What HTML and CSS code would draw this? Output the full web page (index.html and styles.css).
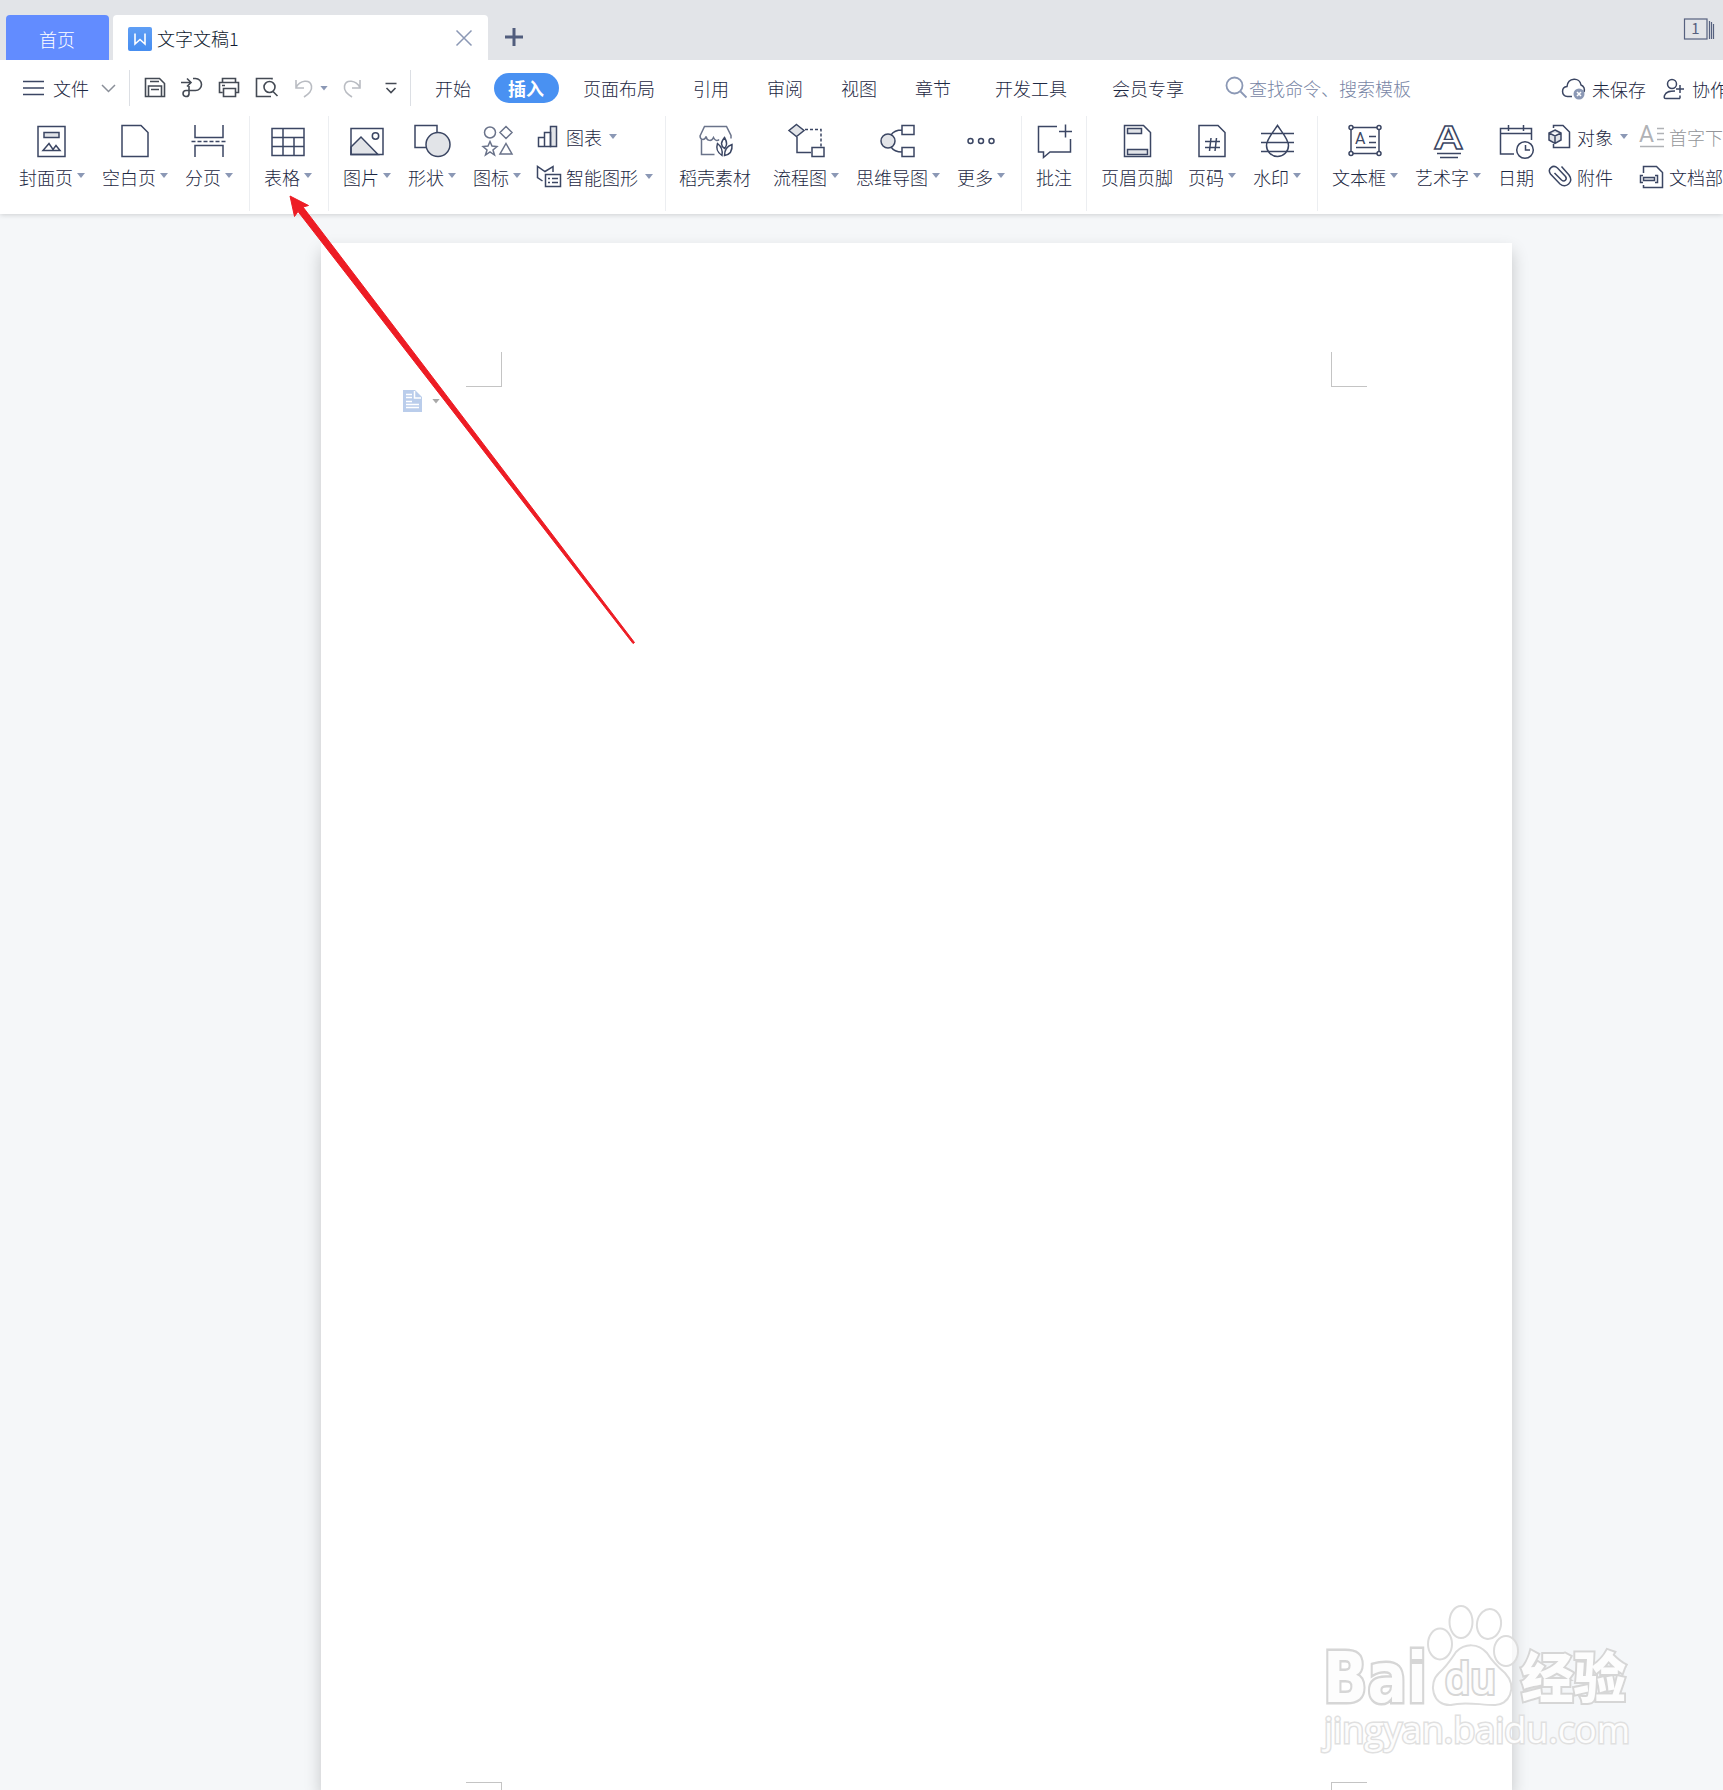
FILE: index.html
```html
<!DOCTYPE html>
<html lang="zh-CN">
<head>
    <meta charset="UTF-8">
    <meta name="viewport" content="width=device-width, initial-scale=1.0">
    <title>文字文稿1</title>
    <link rel="stylesheet" href="styles.css">
</head>
<body>
    <div class="tabs">
        <div class="tab home">首页</div>
        <div class="tab doc">
            <svg class="logo" width="24" height="24"><path d="M7 6.500v10.500l5-4.500 5 4.500V6.500"/></svg>
            <span>文字文稿1</span>
            <svg class="close" width="16" height="16"><path d="M.5.500l15 15M15.500.500l-15 15"/></svg>
        </div>
        <svg class="plus" width="18" height="18"><path d="M9 0v18M0 9h18"/></svg>
        <svg class="windows" width="32" height="22"><rect x="1.500" y="1" width="22.500" height="20"/><path d="M26.500 3v18M28.500 4v17M30.500 6v15"/><text x="12.500" y="16">1</text></svg>
    </div>

    <div class="menu">
        <div class="file">
            <svg width="22" height="16"><path d="M0 1.500h21M0 8h21M0 14.500h21"/></svg>
            <span>文件</span>
            <svg class="chev" width="15" height="9"><path d="M1 1l6.500 6.500L14 1"/></svg>
        </div>
        <div class="quick">
            <svg width="24" height="24"><path d="M2.500 2.500h14l5 5v13h-19zM5.500 20v-10h13V20M7 5.500h9M8 13.500h8" /></svg>
            <svg width="24" height="24"><path d="M1 6.500h9M7 2.500l4 4-4 4M13 2.500h2.500a6 6 0 0 1 0 12H6a3 3 0 1 0 3 3.500V10"/></svg>
            <svg width="24" height="24"><path d="M5.500 6V2.500h13V6M5.500 16.500h-3v-10h19v10h-3M6.500 12.500h12v8h-12zM5 9.500h3"/></svg>
            <svg width="26" height="24"><path d="M18 3.500V2.500H2.500v18H17M19 15.500l4.500 4.500"/><circle cx="15.500" cy="11" r="5.500"/></svg>
            <svg class="off undo" width="20" height="20"><path d="M2 2v8h8M2 9.500C6 2 16 1 17.500 8c1 5-3 8-7.500 11"/></svg>
            <i class="caret"></i>
            <svg class="off redo" width="20" height="20"><path d="M18 2v8h-8M18 9.500C14 2 4 1 2.500 8c-1 5 3 8 7.500 11"/></svg>
            <svg class="more" width="12" height="12"><path d="M.500 1.500h11M1.500 6L6 10.500 10.500 6"/></svg>
        </div>
        <div class="nav">
            <span>开始</span>
            <span class="active">插入</span>
            <span>页面布局</span>
            <span>引用</span>
            <span>审阅</span>
            <span>视图</span>
            <span>章节</span>
            <span class="dev">开发工具</span>
            <span class="vip">会员专享</span>
        </div>
        <div class="search">
            <svg width="24" height="24"><circle cx="9.500" cy="9.500" r="8"/><path d="M15.500 15.500l6 6"/></svg>
            <span>查找命令、搜索模板</span>
        </div>
        <div class="status">
            <svg width="26" height="24"><path d="M11 19.500H6.500C0 19 0 10 6 9.500 7 0 19 0 20 8c3 1 4 4 3 7"/><circle class="dot" cx="18" cy="17" r="5.500"/><path class="x" d="M16 15l4 4M20 15l-4 4"/></svg>
            <span>未保存</span>
            <svg class="user" width="22" height="22"><circle cx="9" cy="6" r="4.500"/><path d="M17 20.500H3c-2 0-2-1-1.500-3C3 13 8 13 12 13M13 11h8M17 7v8M17 20.500v-3"/></svg>
            <span>协作</span>
        </div>
    </div>

    <div class="ribbon">
        <div class="group">
            <div class="btn">
                <svg width="36" height="36"><path d="M4 3.500h27v30H4zM9 27.500h17l-4-5-3 4-4-6z"/><path class="fill" d="M10 9.500h15v5H10z"/></svg>
                <span class="caretd">封面页</span>
            </div>
            <div class="btn">
                <svg width="36" height="36"><path d="M5 2.500h19l7 7v24H5z"/></svg>
                <span class="caretd">空白页</span>
            </div>
            <div class="btn">
                <svg width="36" height="36"><path d="M4 2v12.500h28V2M4 34V22.500h28V34"/><path stroke-dasharray="4 2" d="M.500 18.500h35"/></svg>
                <span class="caretd">分页</span>
            </div>
        </div>
        <div class="group">
            <div class="btn">
                <svg width="36" height="36"><path d="M2 5.500h32v27H2zM2 14.500h32M2 23.500h32M13 5.500v27M24 14.500v18"/></svg>
                <span class="caretd">表格</span>
            </div>
        </div>
        <div class="group charts">
            <div class="btn">
                <svg width="36" height="36"><path class="fill" d="M2 24l10-10 17 17.500H2z"/><path d="M2 5.500h32v26H2z"/><circle cx="26.500" cy="13" r="3.200"/></svg>
                <span class="caretd">图片</span>
            </div>
            <div class="btn">
                <svg width="36" height="36"><path d="M1 2.500h22v22H1z"/><circle class="fill" cx="24" cy="21.500" r="12"/></svg>
                <span class="caretd">形状</span>
            </div>
            <div class="btn">
                <svg class="soft" width="36" height="36"><circle cx="11" cy="9.500" r="5.500"/><path d="M27 3.500l6 6-6 6-6-6zM27 20.500l6 10.500H21zM11 18.500l2 4.500 5 .500-4 3.500 1.500 5-4.500-3-4.500 3 1.500-5-4-3.500 5-.500z"/></svg>
                <span class="caretd">图标</span>
            </div>
            <div class="stack">
                <div class="small">
                    <svg width="24" height="24"><path class="fill" d="M13.500 1.500h6v20h-6z"/><path d="M1.500 12.500h6v9h-6zM7.500 7.500h6v14h-6z"/></svg>
                    <span class="caretd">图表</span>
                </div>
                <div class="small">
                    <svg width="24" height="24"><path d="M5.500 16L.500 12.500V1.500l7.500 5 8-5V7M8.500 9.500h15v12h-15zM11 13.500h2M15 13.500h6M11 17.500h2M15 17.500h6"/></svg>
                    <span class="caretd">智能图形</span>
                </div>
            </div>
        </div>
        <div class="group material">
            <div class="btn">
                <svg class="soft" width="36" height="36"><path d="M3 13L7.500 3.500h22l4.500 9v3M3 12.500c0 5 5 5 6 1 1 5 6 5 7.500 1 1.500 3 4 4 5.500 2M4.500 16v15.500h13"/><path class="dark" d="M27.500 14.500c-4 5-4 8 0 11 3-3 3-6 0-11zM20.500 20.500c-2 6 0 9 4.500 12 1-6-.500-9-4.500-12zM35 21.500c-6 2-7.500 6-7.500 11 6-1 8-5 7.500-11z"/></svg>
                <span>稻壳素材</span>
            </div>
            <div class="btn">
                <svg width="36" height="36"><path class="fill" d="M8.500 1.500l7.500 6-7.500 6-7.500-6z"/><path d="M9 14v15.500h14M24 24.500h12v9H24z"/><path stroke-dasharray="3 2" d="M17 6.500h16v17"/></svg>
                <span class="caretd">流程图</span>
            </div>
            <div class="btn">
                <svg width="36" height="36"><circle class="fill" cx="8" cy="18" r="7"/><path d="M22 2.500h12v9H22zM22 24.500h12v9H22zM11 12c2-3 5-5 11-5M11 24c2 3 5 5 11 5"/></svg>
                <span class="caretd">思维导图</span>
            </div>
            <div class="btn">
                <svg width="36" height="36"><circle cx="7.500" cy="18" r="2.500"/><circle cx="18" cy="18" r="2.500"/><circle cx="28.500" cy="18" r="2.500"/></svg>
                <span class="caretd">更多</span>
            </div>
        </div>
        <div class="group comment">
            <div class="btn">
                <svg width="36" height="36"><path d="M21 3.500H2.500v25.500h5v5.500l6.500-5.500h20.500V16M29.500 1.500v13M23 8.500h13"/></svg>
                <span>批注</span>
            </div>
        </div>
        <div class="group pages">
            <div class="btn">
                <svg width="36" height="36"><path d="M5.500 2.500h19l7 7v24h-26z"/><path class="fill" d="M8.500 5.500h14v5h-14zM8.500 26.500h20v5h-20z"/></svg>
                <span>页眉页脚</span>
            </div>
            <div class="btn">
                <svg width="36" height="36"><path d="M5 2.500h19l7 7v24H5zM11 18.500h15M11 24.500h15M17 15l-1.500 13M22.500 15L21 28"/></svg>
                <span class="caretd">页码</span>
            </div>
            <div class="btn">
                <svg width="36" height="36"><path d="M2 10.500h33M2 19.500h33M2 28.500h33M18.500 2.500C15 8 7.500 16 7.500 22.500a11 11 0 0 0 22 0C29.500 16 22 8 18.500 2.500z"/></svg>
                <span class="caretd">水印</span>
            </div>
        </div>
        <div class="group last">
            <div class="btn">
                <svg width="36" height="36"><path d="M4 4.500h28v26H4zM9 24.500h20M22 13.500h7M22 19.500h7"/><text class="letter" x="8" y="21">A</text><g class="knob"><circle cx="4" cy="4.500" r="2"/><circle cx="32" cy="4.500" r="2"/><circle cx="4" cy="30.500" r="2"/><circle cx="32" cy="30.500" r="2"/></g></svg>
                <span class="caretd">文本框</span>
            </div>
            <div class="btn">
                <svg width="36" height="38"><path d="M7 30.500h24M10 34.500h18"/><text class="art" x="3.500" y="26" textLength="30" lengthAdjust="spacingAndGlyphs">A</text></svg>
                <span class="caretd">艺术字</span>
            </div>
            <div class="btn">
                <svg width="36" height="36"><path d="M16 31H2.500V5.500h31V17M2.500 10.500h31M10.500 2v6M25.500 2v6M27.500 22v5h4.500"/><circle cx="27" cy="27" r="8.300"/></svg>
                <span>日期</span>
            </div>
            <div class="stack objects">
                <div class="small">
                    <svg width="24" height="24"><path d="M5.500 3V.500h9.500l6.500 6.500v15.500H5.500V19"/><path class="fill" d="M7 5l6 3v7l-6 3.500-6-3.500v-7zM1 8l6 3 6-3M7 11v7.500"/></svg>
                    <span class="caretd">对象</span>
                </div>
                <div class="small">
                    <svg width="24" height="24"><path d="M13.500 1.500l7.500 8.500c5 7-3 14-9 9L2.500 9C-1 4 5-1 9.500 3l8 8.500c2 3-1 6-4 3.500L6.500 8"/></svg>
                    <span>附件</span>
                </div>
            </div>
            <div class="stack parts">
                <div class="small disabled">
                    <svg width="24" height="24"><text class="drop" x="-1" y="17">A</text><path d="M17 3.500h7M17 8.500h7M17 14.500h7M0 21.500h24"/></svg>
                    <span>首字下沉</span>
                </div>
                <div class="small">
                    <svg width="24" height="24"><path d="M3.500 8V1.500h13l6 6v15h-19V20M3 10.500H.500v7H3M15 10.500h2.500v7H15"/><path class="fill" d="M3.500 12.500h11v3h-11z"/></svg>
                    <span>文档部件</span>
                </div>
            </div>
        </div>
    </div>

    <div class="canvas">
        <div class="page">
            <i class="mark tl"></i>
            <i class="mark tr"></i>
            <i class="mark bl"></i>
            <i class="mark br"></i>
            <div class="para">
                <svg width="19" height="22"><path fill="#bacdeb" d="M0 0h12l7 7v15H0z"/><path fill="none" stroke="#fff" d="M11.500 1v7H18M3 4.500h6M3 7.500h6M3 11.500h6M3 14.500h13M3 17.500h13"/></svg>
                <i class="caret gray"></i>
            </div>
        </div>
    </div>

    <svg class="arrow" width="350" height="452"><path d="M2 1l18.500 9.500-5.500 1.500L346.500 447.500l-1.500 1L10 16.500 6.500 21.500z"/></svg>

    <svg class="watermark" width="330" height="160">
        <text class="bai" x="8" y="112" textLength="104" lengthAdjust="spacingAndGlyphs">Bai</text>
        <ellipse cx="125" cy="54" rx="12" ry="15.500"/>
        <ellipse cx="146" cy="32" rx="11.500" ry="16"/>
        <ellipse cx="174" cy="34" rx="12" ry="15" transform="rotate(10 174 34)"/>
        <ellipse cx="191" cy="61" rx="12" ry="15"/>
        <path d="M141 62c9-9 22-9 31 1 5 8 11 14 18 20 13 14 4 33-11 32-14 0-30-4-43 0-19 1-23-22-12-32 8-7 13-15 17-21z"/>
        <text class="du" x="130" y="104" textLength="51" lengthAdjust="spacingAndGlyphs">du</text>
        <text class="jing" x="206" y="108" textLength="105" lengthAdjust="spacingAndGlyphs">经验</text>
        <text class="url" x="9" y="153" textLength="306" lengthAdjust="spacingAndGlyphs">jingyan.baidu.com</text>
    </svg>
</body>
</html>
```

FILE: styles.css
```css
* {
    margin: 0;
    padding: 0;
    box-sizing: border-box;
}

body {
    height: 1790px;
    position: relative;
    overflow: hidden;
    display: flex;
    flex-direction: column;
    background-color: #f5f7f9;
    color: #1c2742;
    font-family: 'Noto Sans CJK SC', sans-serif;
    font-size: 18px;
    font-weight: 300;
    line-height: 24px;
    white-space: nowrap;
}

svg {
    display: block;
    flex: none;
    overflow: visible;
    fill: none;
    stroke: #3b4663;
    stroke-width: 1.5;
}

span {
    flex: none;
}

svg text {
    stroke: none;
    fill: #3b4663;
}

.fill {
    fill: #e2e4e8;
}

/* tabs */
.tabs {
    height: 60px;
    flex: none;
    display: flex;
    align-items: flex-end;
    padding: 0 8px 0 6px;
    background-color: #e2e4e8;
}

.tab {
    height: 45px;
    display: flex;
    align-items: center;
    border-radius: 4px 4px 0 0;
}

.home {
    width: 103px;
    justify-content: center;
    padding: 2px 1px 0 0;
    margin-right: 4px;
    background-color: #628cff;
    color: white;
}

.doc {
    width: 375px;
    padding: 0 16px 0 15px;
    background-color: white;
    color: #101a30;
}

.logo {
    background: linear-gradient(#5f9ef5, #468df0);
    border-radius: 2px;
    stroke: white;
    stroke-width: 1.6;
    margin: 2px 5px 0 0;
}

.close {
    margin-left: auto;
    stroke: #8b98b5;
}

.plus {
    margin: 0 auto 14px 17px;
    stroke: #515d7d;
    stroke-width: 3;
}

.windows {
    margin-bottom: 20px;
    stroke: #56617f;
    stroke-width: 1.2;
}

.windows text {
    font-size: 15px;
    font-weight: 400;
    text-anchor: middle;
    fill: #56617f;
}

/* menu */
.menu {
    height: 56px;
    flex: none;
    display: flex;
    align-items: center;
    padding-left: 23px;
    background-color: white;
    position: relative;
    z-index: 1;
}

.menu span {
    margin-top: -1px;
}

.file {
    height: 36px;
    width: 107px;
    flex: none;
    display: flex;
    align-items: center;
    gap: 8px;
    border-right: 1px solid #dcdfe4;
}

.file .chev {
    margin-left: 4px;
    stroke: #8a8f99;
}

.quick {
    height: 36px;
    width: 281px;
    flex: none;
    display: flex;
    align-items: center;
    gap: 13px;
    padding-left: 13px;
    border-right: 1px solid #dcdfe4;
}

.quick svg {
    stroke: #444a54;
    stroke-width: 1.6;
}

.quick .off {
    stroke: #b9bcc2;
}

.quick .undo {
    margin-left: 1px;
}

.quick .caret {
    margin-left: -7px;
}

.quick .redo {
    margin-left: 1px;
}

.quick .more {
    margin-left: 10px;
}

.caret {
    width: 8px;
    height: 5px;
    flex: none;
    background-color: #8b98b5;
    clip-path: polygon(0 0, 100% 0, 50% 100%);
}

.nav {
    display: flex;
    align-items: center;
    gap: 38px;
    margin-left: 24px;
}

.nav .active {
    height: 30px;
    padding: 3px 15px 3px 14px;
    margin: 0 -14px 0 -15px;
    border-radius: 15px;
    background-color: #4991f2;
    color: white;
    font-weight: bold;
}

.nav .dev {
    margin-left: 6px;
}

.nav .vip {
    margin-left: 7px;
}

.search {
    display: flex;
    align-items: center;
    margin-left: 41px;
    color: #7785a5;
}

.search svg {
    stroke: #8b98b5;
    stroke-width: 1.8;
}

.status {
    display: flex;
    align-items: center;
    margin-left: 150px;
    padding-top: 2px;
    gap: 5px;
}

.status .dot {
    fill: #8b98b5;
    stroke: none;
}

.status .x {
    stroke: white;
}

.status .user {
    margin-left: 12px;
    margin-right: 2px;
}

/* ribbon */
.ribbon {
    height: 98px;
    flex: none;
    display: flex;
    padding: 0 0 3px 5px;
    background-color: white;
    box-shadow: 0 1px 5px rgba(0, 0, 0, 0.16);
}

.group {
    flex: none;
    display: flex;
    gap: 18px;
    padding: 7px 17px 0 14px;
    border-right: 1px solid #eceef1;
}

.group.charts {
    padding-right: 13px;
}

.group.material {
    padding-left: 13px;
    padding-right: 17px;
}

.group.material .btn:first-child {
    margin-right: 4px;
}

.group.comment {
    padding-right: 14px;
}

.group.pages .btn:first-child {
    margin-right: -3px;
}

.group.last {
    border: none;
}

.btn {
    display: flex;
    flex-direction: column;
    align-items: center;
}

.btn svg {
    height: 36px;
    margin-bottom: 6px;
}

.soft {
    stroke: #6a738a;
}

.dark {
    stroke: #3b4663;
}

.caretd {
    display: flex;
}

.caretd::after {
    content: '';
    width: 8px;
    height: 5px;
    margin: 8px -1px 0 4px;
    background-color: #8b98b5;
    clip-path: polygon(0 0, 100% 0, 50% 100%);
}

.stack {
    display: flex;
    flex-direction: column;
    gap: 16px;
    margin-left: -1px;
}

.small {
    height: 24px;
    display: flex;
    align-items: center;
    gap: 5px;
    margin: 2px 0 -2px;
}

.small .caretd::after {
    margin: 9px -1px 0 7px;
}

.objects {
    margin-left: -4px;
}

.parts {
    margin-left: -5px;
}

.disabled {
    color: #939599;
}

.disabled svg {
    stroke: #b0b2b6;
}

.letter {
    font: 16px Roboto, sans-serif;
}

svg .art {
    font: bold 33px 'Liberation Sans', sans-serif;
    fill: white;
    stroke: #3b4663;
    stroke-width: 1.3;
}

svg .drop {
    font: 23px Roboto, sans-serif;
    fill: #b0b2b6;
}

.knob {
    fill: white;
}

/* document */
.canvas {
    flex: 1;
    padding: 29px 0 0 321px;
}

.page {
    width: 1191px;
    height: 100%;
    position: relative;
    background-color: white;
    box-shadow: 0 8px 16px rgba(0, 0, 0, 0.2);
}

.mark {
    position: absolute;
    width: 36px;
    height: 35px;
    border: 0 solid #c4c4c4;
}

.tl {
    left: 145px;
    top: 109px;
    border-width: 0 1px 1px 0;
}

.tr {
    left: 1010px;
    top: 109px;
    border-width: 0 0 1px 1px;
}

.bl {
    left: 145px;
    bottom: -27px;
    border-width: 1px 1px 0 0;
}

.br {
    left: 1010px;
    bottom: -27px;
    border-width: 1px 0 0 1px;
}

.para {
    position: absolute;
    left: 82px;
    top: 147px;
    display: flex;
    align-items: center;
    gap: 10px;
}

.para svg {
    stroke: none;
}

.gray {
    background-color: #a8a8a8;
}

.arrow {
    position: absolute;
    left: 288px;
    top: 195px;
    fill: #ed1c24;
    stroke: #ed1c24;
    stroke-width: 1;
}

.watermark {
    position: absolute;
    left: 1315px;
    top: 1590px;
    fill: rgba(255, 255, 255, 0.75);
    stroke: #dcdcdc;
    stroke-width: 2;
}

.watermark text {
    fill: #fdfdfd;
    stroke: #d6d6d6;
    stroke-width: 4;
    paint-order: stroke;
}

.watermark .bai {
    font: bold 70px 'DejaVu Sans', sans-serif;
    stroke-width: 5;
}

.watermark .du {
    font: 600 43px 'Open Sans', sans-serif;
}

.watermark .jing {
    font-size: 54px;
    font-weight: 900;
}

.watermark .url {
    font: 36px 'Open Sans', sans-serif;
    stroke: #e0e0e0;
    stroke-width: 3;
}
```
